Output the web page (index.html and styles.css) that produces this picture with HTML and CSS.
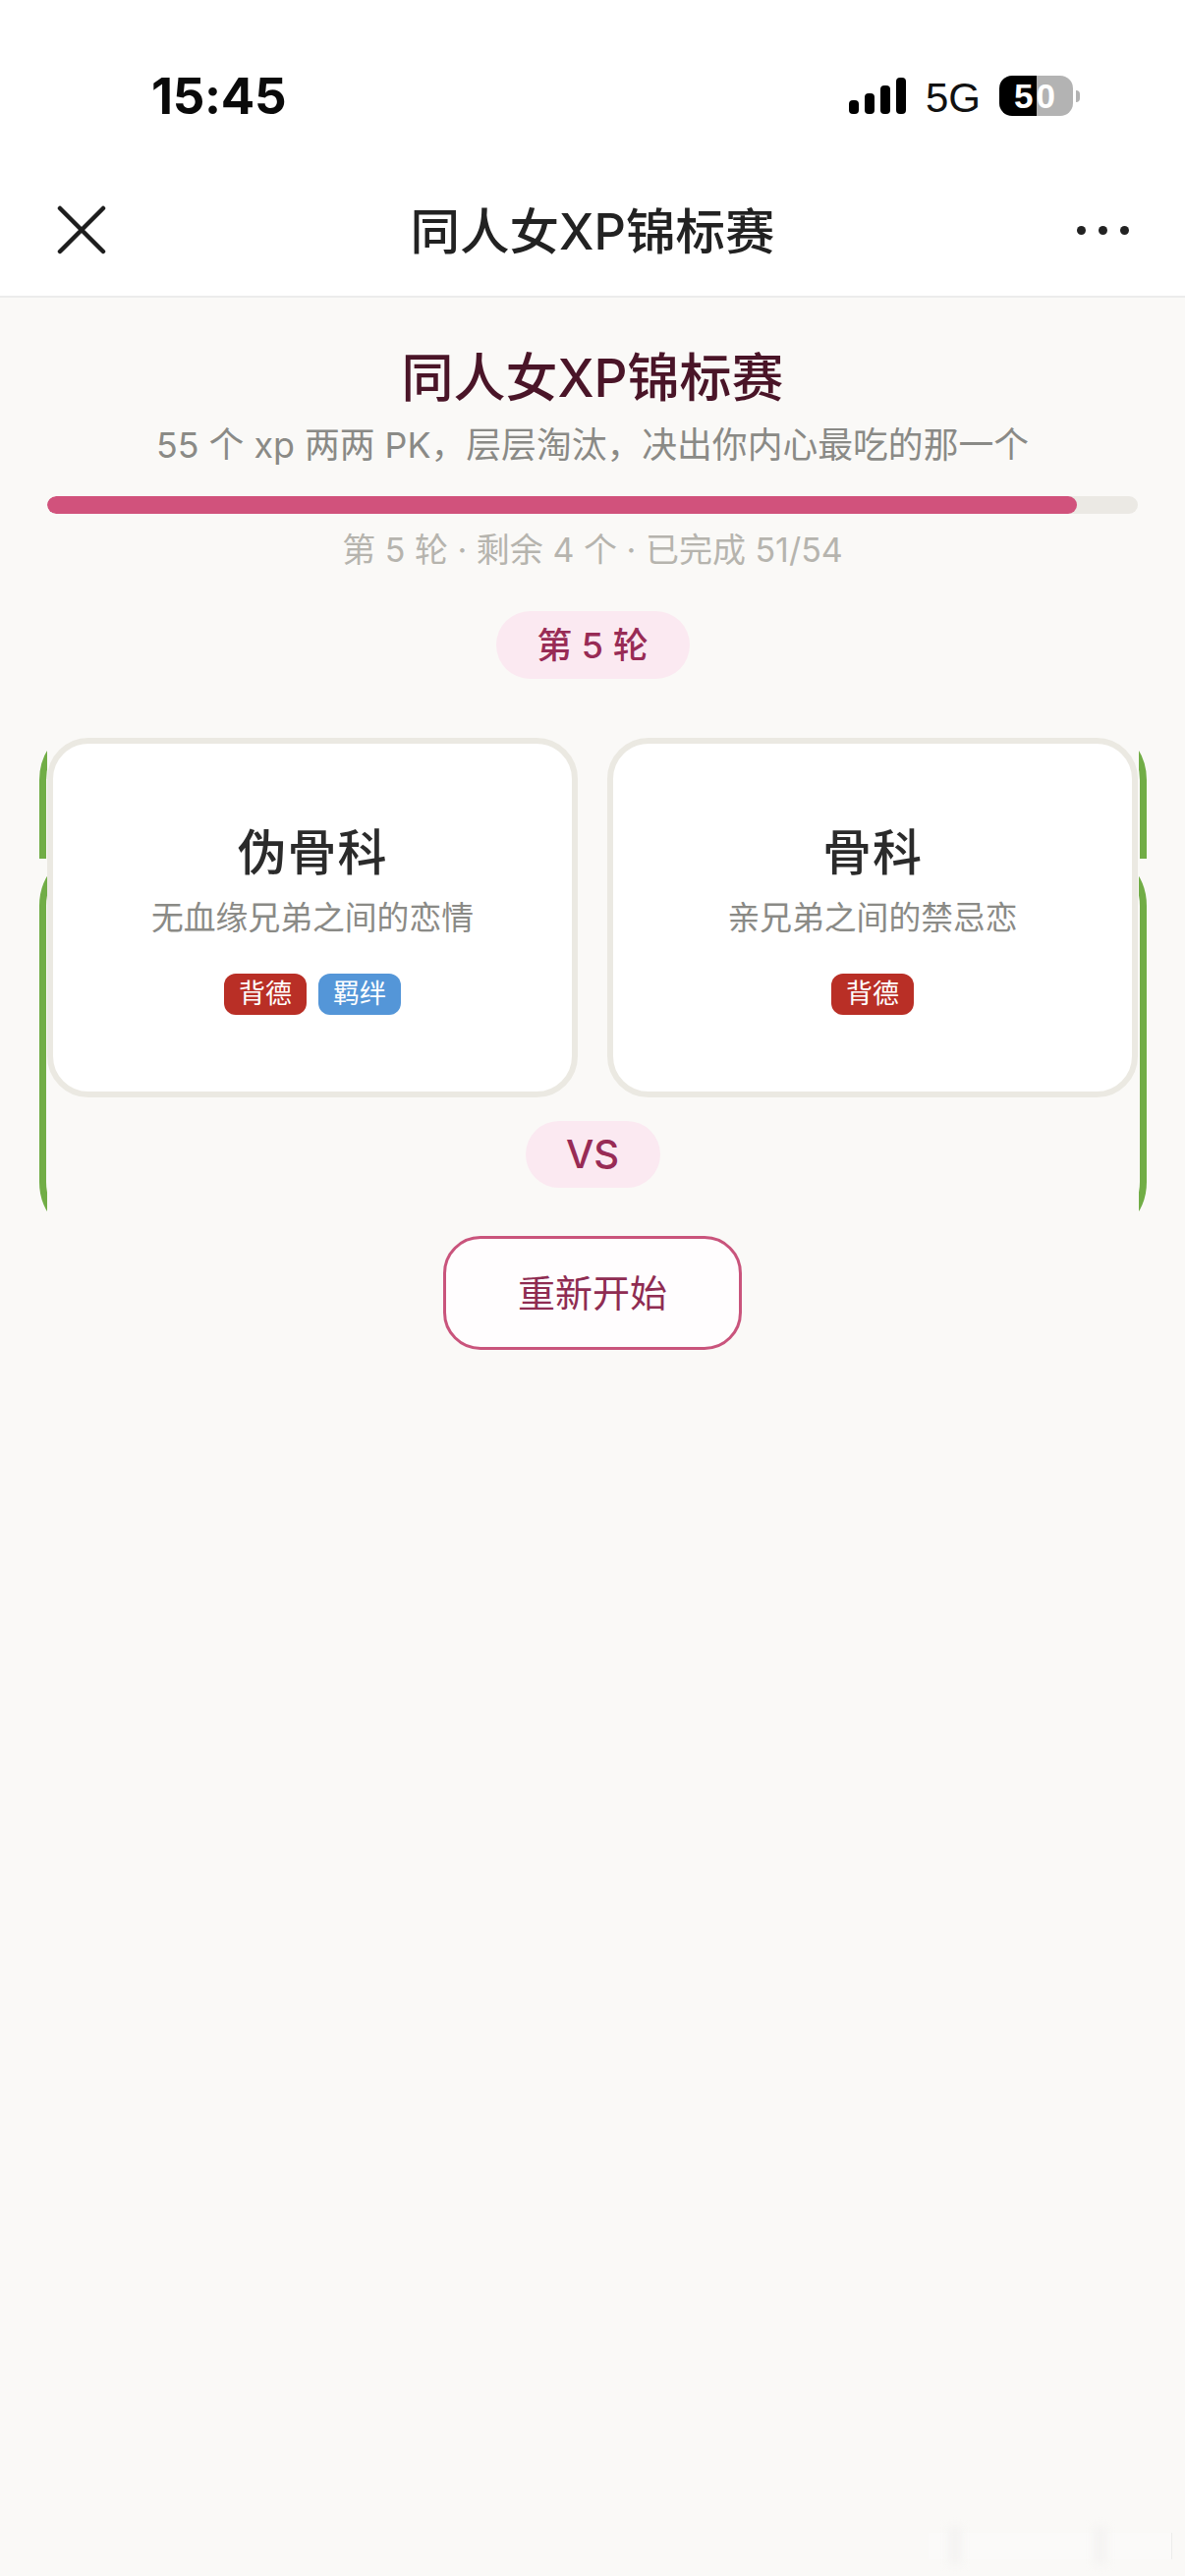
FILE: index.html
```html
<!DOCTYPE html>
<html lang="zh-CN">
<head>
<meta charset="utf-8">
<title>同人女XP锦标赛</title>
<link rel="stylesheet" href="styles.css">
</head>
<body>
<div class="page">
  <header class="top">
    <div class="status">
      <span class="time">15:45</span>
      <div class="status-right">
        <div class="signal"><i class="b1"></i><i class="b2"></i><i class="b3"></i><i class="b4"></i></div>
        <span class="net">5G</span>
        <div class="battery"><div class="batt-body"><span>50</span></div><div class="batt-tip"></div></div>
      </div>
    </div>
    <nav class="nav">
      <svg class="close" width="50" height="50" viewBox="0 0 50 50"><path d="M3 3 L47 47 M47 3 L3 47" stroke="#1d1d1d" stroke-width="4.5" stroke-linecap="round" fill="none"/></svg>
      <span class="nav-title">同人女XP锦标赛</span>
      <div class="dots"><i></i><i></i><i></i></div>
    </nav>
  </header>
  <main class="main">
    <h1 class="title">同人女XP锦标赛</h1>
    <p class="sub">55 个 xp 两两 PK，层层淘汰，决出你内心最吃的那一个</p>
    <div class="track"><div class="fill" style="width:94.4%"></div></div>
    <p class="stats">第 5 轮 · 剩余 4 个 · 已完成 51/54</p>
    <div class="round">第 5 轮</div>
    <section class="arena">
      <div class="decor">
        <div class="clip-top"><div class="ring ring-a"></div></div>
        <div class="ring ring-b"></div>
        <div class="cover"></div>
      </div>
      <div class="cards">
        <article class="card">
          <h2 class="name">伪骨科</h2>
          <p class="desc">无血缘兄弟之间的恋情</p>
          <div class="tags"><span class="tag red">背德</span><span class="tag blue">羁绊</span></div>
        </article>
        <article class="card">
          <h2 class="name">骨科</h2>
          <p class="desc">亲兄弟之间的禁忌恋</p>
          <div class="tags"><span class="tag red">背德</span></div>
        </article>
      </div>
      <div class="vs">VS</div>
      <button class="restart">重新开始</button>
    </section>
  </main>
  <div class="mark"><i class="smear s1"></i><i class="smear s2"></i></div>
</div>
</body>
</html>
```
FILE: styles.css
```css
* { box-sizing: border-box; margin: 0; padding: 0; }
html, body { width: 1206px; height: 2622px; overflow: hidden; }
body { font-family: "Inter", "Noto Sans CJK SC", sans-serif; background: #faf9f7; }
.page { position: relative; width: 1206px; height: 2622px; display: flex; flex-direction: column; background: #faf9f7; }

.top { background: #fff; border-bottom: 2px solid #ececec; height: 303px; flex: none; }
.status { height: 178px; padding: 72px 107px 0 154px; display: flex; justify-content: space-between; align-items: flex-start; }
.time { font-size: 51px; line-height: 52px; font-weight: 700; color: #0a0a0a; letter-spacing: -0.3px; font-family: "Inter", sans-serif; }
.status-right { display: flex; align-items: flex-start; }
.signal { display: flex; align-items: flex-end; gap: 6px; height: 37px; margin-top: 7px; }
.signal i { display: block; width: 10px; background: #000; border-radius: 4px; }
.b1 { height: 14px; } .b2 { height: 21px; } .b3 { height: 29px; } .b4 { height: 37px; }
.net { font-size: 42px; line-height: 42px; margin: 7px 0 0 20px; width: 75px; color: #111; font-family: "Liberation Sans", sans-serif; }
.battery { display: flex; align-items: center; margin-top: 5px; }
.batt-body { width: 75px; height: 41px; border-radius: 13px; background: linear-gradient(90deg, #000 0, #000 38px, #b3b3b3 38px); color: #fff; font-size: 35px; line-height: 41px; font-weight: 700; letter-spacing: 3px; text-align: center; font-family: "Liberation Sans", sans-serif; }
.batt-tip { width: 4px; height: 12px; margin-left: 3px; background: #b3b3b3; border-radius: 0 6px 6px 0; }

.nav { position: relative; height: 123px; display: flex; align-items: center; justify-content: center; }
.close { position: absolute; left: 58px; top: 31px; }
.nav-title { font-size: 50.5px; line-height: 70px; font-weight: 500; color: #222; margin-top: -8px; }
.dots { position: absolute; left: 1096px; top: 52px; display: flex; gap: 13px; }
.dots i { display: block; width: 9px; height: 9px; border-radius: 50%; background: #222; }

.main { padding: 0 48px; display: flex; flex-direction: column; align-items: center; flex: 1; }
.title { font-size: 53px; line-height: 70px; font-weight: 500; color: #4a1528; margin-top: 47px; }
.sub { font-size: 35.8px; line-height: 46px; color: #8a8a86; margin-top: 10px; }
.track { width: 1110px; height: 18px; border-radius: 9px; background: #ebe9e4; margin-top: 29px; overflow: hidden; }
.fill { height: 100%; border-radius: 9px; background: #d1527c; }
.stats { font-size: 34px; line-height: 44px; color: #b6b4ae; margin-top: 15px; }
.round { height: 69px; width: 197px; border-radius: 35px; background: #fbe9f1; color: #982b55; font-size: 36px; font-weight: 500; line-height: 71px; text-align: center; margin-top: 40px; }

.arena { position: relative; width: 1110px; margin-top: 60px; display: flex; flex-direction: column; align-items: center; }
.decor { position: absolute; left: -8px; right: -9px; top: -17px; height: 530px; }
.clip-top { position: absolute; left: 0; right: 0; top: 0; height: 140px; overflow: hidden; }
.ring { position: absolute; left: 0; right: 0; border: 7px solid #71ad46; border-radius: 60px; }
.ring-a { top: 0; height: 400px; }
.ring-b { top: 128px; height: 401px; }
.cover { position: absolute; left: 8px; right: 8px; top: -2px; bottom: -2px; background: #faf9f7; }
.cards { position: relative; width: 100%; display: flex; gap: 30px; }
.card { flex: 1; height: 366px; background: #fff; border: 6px solid #ebe9e2; border-radius: 42px; display: flex; flex-direction: column; align-items: center; padding-top: 77px; }
.name { font-size: 50px; line-height: 68px; font-weight: 500; color: #2b2b2b; letter-spacing: 1px; }
.desc { font-size: 32.8px; line-height: 44px; color: #8a8a86; margin-top: 10px; }
.tags { display: flex; gap: 12px; margin-top: 35px; }
.tag { height: 42px; width: 84px; border-radius: 12px; color: #fff; font-size: 27px; line-height: 42px; text-align: center; }
.red { background: #b92f26; }
.blue { background: #5496d8; }
.vs { position: relative; width: 137px; height: 68px; border-radius: 34px; background: #fbe9f1; color: #982b55; font-size: 40px; font-weight: 500; line-height: 68px; text-align: center; margin-top: 24px; }
.restart { position: relative; width: 304px; height: 116px; border: 3px solid #c9547c; border-radius: 38px; background: #fffdfe; color: #8f2c52; font-family: inherit; font-size: 38px; font-weight: 400; padding-bottom: 5px; margin-top: 49px; }

.mark { position: absolute; left: 945px; top: 2578px; width: 248px; height: 27px; background: #fbfaf9; border-right: 1px solid #ececeb; }
.smear { position: absolute; top: -6px; width: 14px; height: 38px; background: #f4f3f2; filter: blur(4px); }
.s1 { left: 20px; }
.s2 { left: 168px; }
```
